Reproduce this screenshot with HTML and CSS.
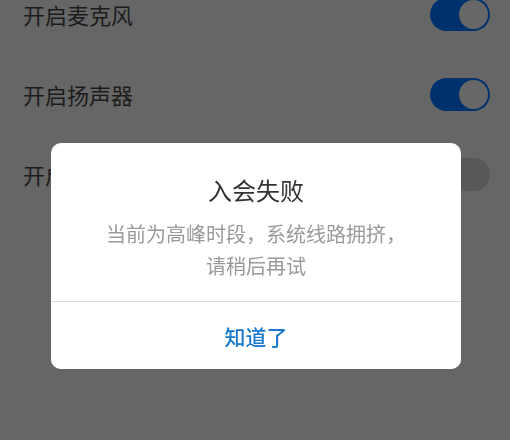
FILE: index.html
```html
<!DOCTYPE html>
<html lang="zh-CN">
<head>
    <meta charset="UTF-8">
    <meta name="viewport" content="width=device-width, initial-scale=1.0">
    <title>入会设置</title>
    <link rel="stylesheet" href="styles.css">
</head>
<body>
    <div class="settings">
        <div class="row">
            <span class="label">开启麦克风</span>
            <span class="switch on"><span class="knob"></span></span>
        </div>
        <div class="row">
            <span class="label">开启扬声器</span>
            <span class="switch on"><span class="knob"></span></span>
        </div>
        <div class="row">
            <span class="label">开启摄像头</span>
            <span class="switch"><span class="knob"></span></span>
        </div>
    </div>

    <div class="mask">
        <div class="dialog">
            <div class="dialog-body">
                <div class="dialog-title">入会失败</div>
                <div class="dialog-msg">当前为高峰时段，系统线路拥挤，<br>请稍后再试</div>
            </div>
            <button class="dialog-btn">知道了</button>
        </div>
    </div>
</body>
</html>
```

FILE: styles.css
```css
html, body {
    margin: 0;
    padding: 0;
}
body {
    width: 510px;
    height: 440px;
    overflow: hidden;
    background: #666666;
    font-family: "Noto Sans CJK SC", "Noto Sans", sans-serif;
}
.settings {
    margin-top: -26px;
}
.row {
    height: 80px;
    display: flex;
    align-items: center;
    justify-content: space-between;
    padding: 0 20px 0 23px;
}
.label {
    font-size: 22px;
    color: #1c1c1c;
}
.switch {
    width: 60px;
    height: 33px;
    border-radius: 17px;
    background: #58585a;
    display: flex;
    align-items: center;
    padding: 0 2px;
    box-sizing: border-box;
}
.switch.on {
    background: #00316f;
    justify-content: flex-end;
}
.knob {
    width: 29px;
    height: 29px;
    border-radius: 50%;
    background: #676767;
}
.switch:not(.on) .knob {
    background: #58585a;
}
.mask {
    position: fixed;
    inset: 0;
    display: flex;
    justify-content: center;
    align-items: flex-start;
    padding-top: 143px;
}
.dialog {
    width: 410px;
    background: #fff;
    border-radius: 10px;
    overflow: hidden;
    margin-left: 2px;
}
.dialog-body {
    padding: 30px 20px 19px;
    text-align: center;
    border-bottom: 1px solid #dedede;
}
.dialog-title {
    font-size: 24px;
    line-height: 34px;
    color: #333;
}
.dialog-msg {
    margin-top: 11px;
    font-size: 20px;
    line-height: 32px;
    color: #9a9a9a;
}
.dialog-btn {
    display: block;
    width: 100%;
    height: 67px;
    border: none;
    background: #fff;
    font-family: inherit;
    font-size: 21px;
    font-weight: 500;
    color: #1a79cc;
    cursor: pointer;
}
```
